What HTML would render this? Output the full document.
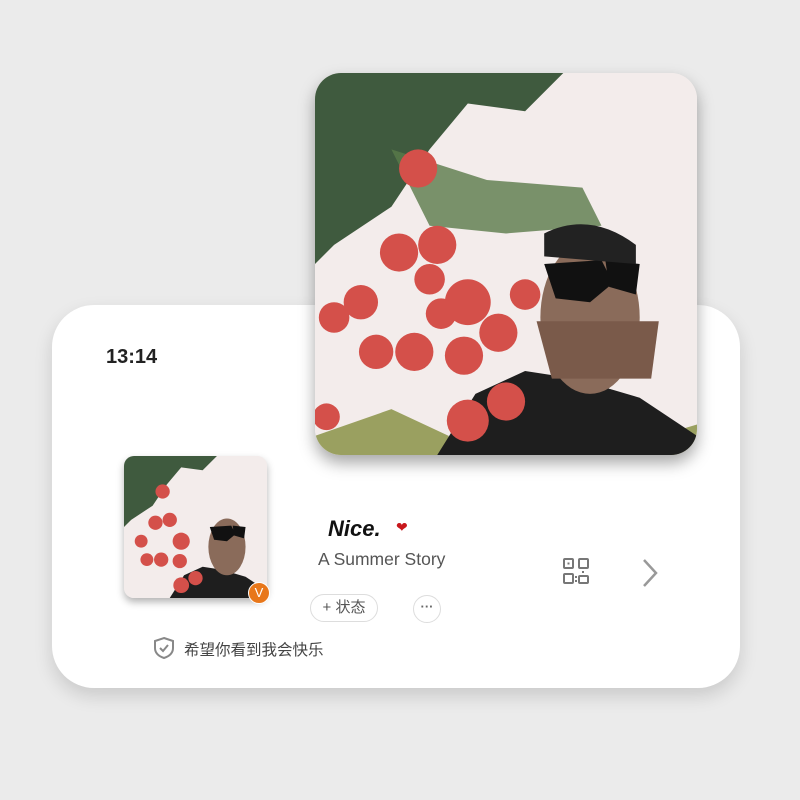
<!DOCTYPE html>
<html><head><meta charset="utf-8"><style>
body{margin:0;width:800px;height:800px;background:#ebebeb;position:relative;overflow:hidden;font-family:"Liberation Sans","Noto Sans CJK SC",sans-serif}
.card{position:absolute;left:52px;top:305px;width:688px;height:383px;background:#fff;border-radius:42px;box-shadow:0 8px 18px rgba(0,0,0,.14)}
.photo{position:absolute;overflow:hidden;background:#f2eceb}
.big{left:315px;top:73px;width:382px;height:382px;border-radius:26px;box-shadow:0 8px 16px rgba(0,0,0,.35)}
.small{left:124px;top:456px;width:143px;height:142px;border-radius:10px;box-shadow:0 4px 8px rgba(0,0,0,.3)}
.photo svg{width:100%;height:100%;display:block}
</style></head><body>
<div class="card"></div>
<div class="photo big"><svg viewBox="0 0 100 100" preserveAspectRatio="none">
<rect width="100" height="100" fill="#f3eceb"/>
<path d="M0 0H65L55 10L40 8L30 20L20 35L5 45L0 50Z" fill="#3f5a3e"/>
<path d="M20 20L45 28L70 30L75 40L50 42L30 40Z" fill="#5a7a4a" opacity=".8"/>
<path d="M0 95L20 88L35 95L35 100H0Z" fill="#9aa060"/>
<path d="M90 95L100 92V100H90Z" fill="#9aa060"/>
<path d="M32 100L42 84L55 78L68 80L85 85L100 95V100Z" fill="#1e1e1e"/>
<ellipse cx="72" cy="64" rx="13" ry="20" fill="#8a6b5a"/>
<path d="M58 65L90 65L88 80L62 80Z" fill="#7a5a4a"/>
<path d="M60 50L75 49L78 55L72 60L63 59Z M76 49L85 50L84 58L77 56Z" fill="#111"/>
<path d="M60 42Q72 36 84 45L84 50L60 48Z" fill="#222"/>
<g fill="#d4504a"><circle cx="27" cy="25" r="5"/><circle cx="32" cy="45" r="5"/><circle cx="22" cy="47" r="5"/><circle cx="40" cy="60" r="6"/><circle cx="33" cy="63" r="4"/><circle cx="12" cy="60" r="4.5"/><circle cx="5" cy="64" r="4"/><circle cx="16" cy="73" r="4.5"/><circle cx="26" cy="73" r="5"/><circle cx="39" cy="74" r="5"/><circle cx="48" cy="68" r="5"/><circle cx="40" cy="91" r="5.5"/><circle cx="50" cy="86" r="5"/><circle cx="3" cy="90" r="3.5"/><circle cx="55" cy="58" r="4"/><circle cx="30" cy="54" r="4"/></g>
</svg></div>
<div class="photo small"><svg viewBox="0 0 100 100" preserveAspectRatio="none">
<rect width="100" height="100" fill="#f3eceb"/>
<path d="M0 0H65L55 10L40 8L30 20L20 35L5 45L0 50Z" fill="#3f5a3e"/>
<path d="M32 100L42 84L55 78L68 80L85 85L100 95V100Z" fill="#1e1e1e"/>
<ellipse cx="72" cy="64" rx="13" ry="20" fill="#8a6b5a"/>
<path d="M60 50L75 49L78 55L72 60L63 59Z M76 49L85 50L84 58L77 56Z" fill="#111"/>
<g fill="#d4504a"><circle cx="27" cy="25" r="5"/><circle cx="32" cy="45" r="5"/><circle cx="22" cy="47" r="5"/><circle cx="40" cy="60" r="6"/><circle cx="12" cy="60" r="4.5"/><circle cx="16" cy="73" r="4.5"/><circle cx="26" cy="73" r="5"/><circle cx="39" cy="74" r="5"/><circle cx="40" cy="91" r="5.5"/><circle cx="50" cy="86" r="5"/></g>
</svg></div>
<div style="position:absolute;left:248px;top:582px;width:20px;height:20px;border-radius:50%;background:#e8771a;border:1.5px solid #fff;color:#fff;font-size:13px;text-align:center;line-height:20px">V</div>
<div style="position:absolute;left:106px;top:346px;font-size:20px;font-weight:bold;color:#222">13:14</div>
<div style="position:absolute;left:328px;top:516px;font-size:22px;font-weight:bold;font-style:italic;color:#111">Nice.</div>
<div style="position:absolute;left:396px;top:519px;color:#c8171c;font-size:14px">❤</div>
<div style="position:absolute;left:318px;top:549px;font-size:17.5px;color:#555">A Summer Story</div>
<div style="position:absolute;left:310px;top:594px;width:66px;height:26px;border:1px solid #ddd;border-radius:14px;font-size:15px;color:#555;text-align:center;line-height:26px">+ 状态</div>
<div style="position:absolute;left:413px;top:595px;width:26px;height:26px;border:1px solid #ddd;border-radius:50%;font-size:13px;font-weight:bold;color:#666;text-align:center;line-height:22px">···</div>
<svg style="position:absolute;left:562px;top:557px" width="28" height="28" viewBox="0 0 28 28" fill="none" stroke="#777" stroke-width="2"><rect x="2" y="2" width="9" height="9" rx="1"/><rect x="17" y="2" width="9" height="9" rx="1"/><rect x="2" y="17" width="9" height="9" rx="1"/><rect x="17" y="19" width="9" height="7" rx="1"/><rect x="5.5" y="5.5" width="2" height="2" fill="#777" stroke="none"/><rect x="13" y="19" width="2" height="2" fill="#777" stroke="none"/><rect x="13" y="23" width="2" height="2" fill="#777" stroke="none"/><rect x="20" y="14" width="2" height="2" fill="#777" stroke="none"/></svg>
<svg style="position:absolute;left:640px;top:558px" width="20" height="30" viewBox="0 0 20 30" fill="none" stroke="#999" stroke-width="2.5"><path d="M4 2L16 15L4 28"/></svg>
<svg style="position:absolute;left:153px;top:636px" width="22" height="24" viewBox="0 0 22 24" fill="none" stroke="#888" stroke-width="2"><path d="M11 2L20 5V12Q20 19 11 22Q2 19 2 12V5Z"/><path d="M7 12L10 15L15 9"/></svg>
<div style="position:absolute;left:184px;top:638px;font-size:15.5px;color:#444">希望你看到我会快乐</div>
</body></html>
